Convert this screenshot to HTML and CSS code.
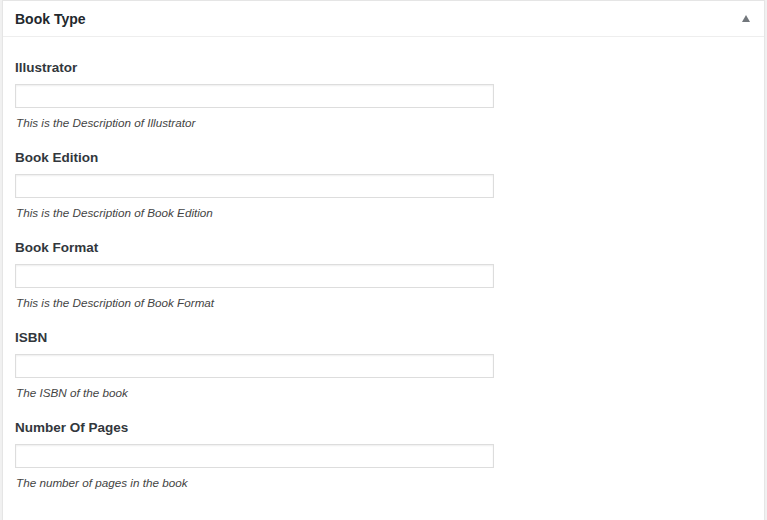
FILE: index.html
```html
<!DOCTYPE html>
<html>
<head>
<meta charset="utf-8">
<link rel="stylesheet" href="styles.css">
</head>
<body>
<div class="postbox">
  <div class="postbox-header">
    <h2 class="hndle">Book Type</h2>
    <span class="toggle" aria-hidden="true"></span>
  </div>
  <div class="inside">
    <div class="field">
      <label class="field-label">Illustrator</label>
      <input class="field-input" type="text">
      <p class="description">This is the Description of Illustrator</p>
    </div>
    <div class="field">
      <label class="field-label">Book Edition</label>
      <input class="field-input" type="text">
      <p class="description">This is the Description of Book Edition</p>
    </div>
    <div class="field">
      <label class="field-label">Book Format</label>
      <input class="field-input" type="text">
      <p class="description">This is the Description of Book Format</p>
    </div>
    <div class="field">
      <label class="field-label">ISBN</label>
      <input class="field-input" type="text">
      <p class="description">The ISBN of the book</p>
    </div>
    <div class="field">
      <label class="field-label">Number Of Pages</label>
      <input class="field-input" type="text">
      <p class="description">The number of pages in the book</p>
    </div>
  </div>
</div>
</body>
</html>
```

FILE: styles.css
```css
html, body {
  margin: 0;
  padding: 0;
  background: #f1f1f1;
  height: 100%;
  overflow: hidden;
}
body {
  font-family: "Liberation Sans", Arial, sans-serif;
  color: #23282d;
}
.postbox {
  margin: 0 2px;
  background: #fff;
  border: 1px solid #e5e5e5;
  border-bottom: none;
  box-shadow: 0 1px 1px rgba(0,0,0,0.04);
  min-height: 540px;
}
.postbox-header {
  display: flex;
  align-items: center;
  justify-content: space-between;
  height: 35px;
  border-bottom: 1px solid #eee;
  padding: 0 14px 0 12px;
}
.hndle {
  margin: 0;
  font-size: 14px;
  font-weight: 700;
  line-height: 20px;
  color: #23282d;
}
.toggle {
  width: 0;
  height: 0;
  border-left: 4px solid transparent;
  border-right: 4px solid transparent;
  border-bottom: 7px solid #72777c;
  margin-top: -1px;
}
.inside {
  padding: 20px 12px 0 12px;
}
.field {
  display: flex;
  flex-direction: column;
  align-items: flex-start;
  margin-bottom: 16px;
}
.field-label {
  padding-top: 2px;
  font-size: 13.5px;
  font-weight: 700;
  line-height: 18px;
  color: #32373c;
}
.field-input {
  box-sizing: border-box;
  margin: 7px 0 0 0;
  width: 479px;
  height: 24px;
  border: 1px solid #ddd;
  box-shadow: inset 0 1px 2px rgba(0,0,0,0.07);
  background: #fff;
  padding: 2px 6px;
  font-size: 14px;
  outline: none;
}
.description {
  margin: 7px 0 0 1px;
  font-size: 11.7px;
  font-style: italic;
  line-height: 16px;
  color: #444;
}
```
